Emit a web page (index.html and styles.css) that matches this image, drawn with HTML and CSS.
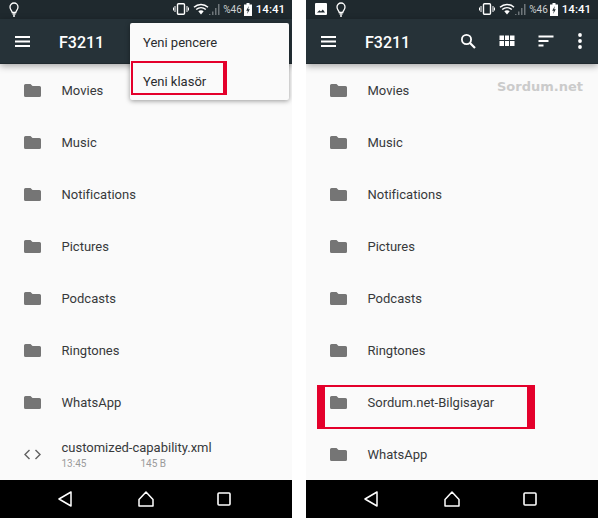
FILE: index.html
```html
<!DOCTYPE html>
<html lang="tr">
<head>
  <meta charset="UTF-8">
  <meta name="viewport" content="width=device-width, initial-scale=1.0">
  <title>Yeni klasör</title>
  <link rel="stylesheet" href="styles.css">
</head>
<body>
  <!-- shared icons -->
  <svg class="icon-defs" width="0" height="0">
    <symbol id="i-folder" viewBox="0 0 17 13">
      <path d="M1.5 0H6.5L8.5 2H15.5A1.5 1.5 0 0 1 17 3.500V11.500A1.500 1.500 0 0 1 15.500 13H1.500A1.500 1.500 0 0 1 0 11.500V1.500A1.500 1.500 0 0 1 1.500 0Z" fill="#757575"/>
    </symbol>
    <symbol id="i-menu" viewBox="0 0 15 11">
      <path d="M0 1H15M0 5.500H15M0 10H15" stroke="#fff" stroke-width="1.800" fill="none"/>
    </symbol>
    <symbol id="i-bulb" viewBox="0 0 10 15">
      <path d="M3.200 10.500C3 8.500 1 7.800 1 5A4 4 0 0 1 9 5C9 7.800 7 8.500 6.800 10.500Z" fill="none" stroke="#fff" stroke-width="1.300"/>
      <path d="M3.500 12H6.500M4 14H6" stroke="#fff" stroke-width="1.300"/>
    </symbol>
    <symbol id="i-vibrate" viewBox="0 0 16 12">
      <rect x="4.500" y="0.700" width="7" height="10.600" rx="1" fill="none" stroke="#fff" stroke-width="1.400"/>
      <path d="M2 3V9M14 3V9M0.500 4.500V7.500M15.500 4.500V7.500" stroke="#fff" stroke-width="1"/>
    </symbol>
    <symbol id="i-wifi" viewBox="0 0 16 12">
      <path d="M1 4.200C5 0.600 11 0.600 15 4.200M3.200 6.500C6 4 10 4 12.800 6.500" fill="none" stroke="#fff" stroke-width="1.500"/>
      <path d="M5.300 8.300C6.800 7 9.200 7 10.700 8.300L8 11.500Z" fill="#fff"/>
    </symbol>
    <symbol id="i-signal" viewBox="0 0 11 11">
      <path d="M0 11H1.500V10H0ZM3 11H4.500V7.500H3ZM6 11H7.500V4H6ZM9 11H10.500V0H9Z" fill="#6f767a"/>
    </symbol>
    <symbol id="i-battery" viewBox="0 0 8 13">
      <path d="M2.500 0H5.500V1.500H8V13H0V1.500H2.500Z" fill="#fff"/>
      <path d="M4.800 3L2.200 7.800H3.800L3.200 11L5.800 6.200H4.200Z" fill="#1f292e"/>
    </symbol>
    <symbol id="i-back" viewBox="0 0 14 16">
      <path d="M13 1V15L1 8Z" fill="none" stroke="#fff" stroke-width="1.500" stroke-linejoin="round"/>
    </symbol>
    <symbol id="i-home" viewBox="0 0 16 16">
      <path d="M8 1L15 8.500V15H1V8.500Z" fill="none" stroke="#fff" stroke-width="1.500" stroke-linejoin="round"/>
    </symbol>
    <symbol id="i-square" viewBox="0 0 14 14">
      <rect x="1" y="1" width="12" height="12" rx="1" fill="none" stroke="#fff" stroke-width="1.600"/>
    </symbol>
  </svg>

  <div class="screens">
    <section class="phone">
      <div class="status-bar">
        <div class="status-left">
          <svg class="ic-bulb"><use href="#i-bulb"/></svg>
        </div>
        <div class="status-right">
          <svg class="ic-vibrate"><use href="#i-vibrate"/></svg>
          <svg class="ic-wifi"><use href="#i-wifi"/></svg>
          <svg class="ic-signal"><use href="#i-signal"/></svg>
          <span class="battery-text">%46</span>
          <svg class="ic-battery"><use href="#i-battery"/></svg>
          <span class="clock">14:41</span>
        </div>
      </div>
      <header class="toolbar">
        <svg class="ic-menu"><use href="#i-menu"/></svg>
        <span class="toolbar-title">F3211</span>
      </header>
      <ul class="file-list">
        <li class="file-row"><svg class="ic-folder"><use href="#i-folder"/></svg><span class="file-name">Movies</span></li>
        <li class="file-row"><svg class="ic-folder"><use href="#i-folder"/></svg><span class="file-name">Music</span></li>
        <li class="file-row"><svg class="ic-folder"><use href="#i-folder"/></svg><span class="file-name">Notifications</span></li>
        <li class="file-row"><svg class="ic-folder"><use href="#i-folder"/></svg><span class="file-name">Pictures</span></li>
        <li class="file-row"><svg class="ic-folder"><use href="#i-folder"/></svg><span class="file-name">Podcasts</span></li>
        <li class="file-row"><svg class="ic-folder"><use href="#i-folder"/></svg><span class="file-name">Ringtones</span></li>
        <li class="file-row"><svg class="ic-folder"><use href="#i-folder"/></svg><span class="file-name">WhatsApp</span></li>
        <li class="file-row">
          <svg class="ic-code" viewBox="0 0 17 11"><path d="M5.500 1L1 5.500L5.500 10M11.500 1L16 5.500L11.500 10" fill="none" stroke="#616161" stroke-width="1.400"/></svg>
          <div class="file-info">
            <span class="file-name">customized-capability.xml</span>
            <div class="file-meta"><span class="file-time">13:45</span><span>145 B</span></div>
          </div>
        </li>
      </ul>
      <nav class="nav-bar">
        <svg class="ic-back"><use href="#i-back"/></svg>
        <svg class="ic-home"><use href="#i-home"/></svg>
        <svg class="ic-square"><use href="#i-square"/></svg>
      </nav>

      <div class="popup-menu">
        <div class="popup-item">Yeni pencere</div>
        <div class="popup-item">Yeni klasör</div>
      </div>
      <div class="mark mark-menu"></div>
    </section>

    <section class="phone">
      <div class="status-bar">
        <div class="status-left">
          <svg class="ic-image" viewBox="0 0 12 12"><path d="M1 0H11A1 1 0 0 1 12 1V11A1 1 0 0 1 11 12H1A1 1 0 0 1 0 11V1A1 1 0 0 1 1 0ZM2 9.500H10L7.800 6.500L6 8.500L4.500 7.300Z" fill="#fff" fill-rule="evenodd"/></svg>
          <svg class="ic-bulb"><use href="#i-bulb"/></svg>
        </div>
        <div class="status-right">
          <svg class="ic-vibrate"><use href="#i-vibrate"/></svg>
          <svg class="ic-wifi"><use href="#i-wifi"/></svg>
          <svg class="ic-signal"><use href="#i-signal"/></svg>
          <span class="battery-text">%46</span>
          <svg class="ic-battery"><use href="#i-battery"/></svg>
          <span class="clock">14:41</span>
        </div>
      </div>
      <header class="toolbar">
        <svg class="ic-menu"><use href="#i-menu"/></svg>
        <span class="toolbar-title">F3211</span>
        <div class="toolbar-actions">
          <svg class="ic-action" viewBox="0 0 24 24"><circle cx="10.500" cy="10.500" r="4.600" fill="none" stroke="#fff" stroke-width="1.800"/><path d="M14 14L19 19" stroke="#fff" stroke-width="2.200"/></svg>
          <svg class="ic-action" viewBox="0 0 24 24"><path d="M4.500 6.500H9V11H4.500ZM10 6.500H14V11H10ZM15 6.500H19.500V11H15ZM4.500 12H9V17H4.500ZM10 12H14V17H10ZM15 12H19.500V17H15Z" fill="#fff"/></svg>
          <svg class="ic-action" viewBox="0 0 24 24"><path d="M4.500 7.500H19.500M4.500 12H14.500M4.500 16.500H9.500" stroke="#fff" stroke-width="1.800" fill="none"/></svg>
          <svg class="ic-action ic-dots" viewBox="0 0 24 24"><circle cx="12" cy="6" r="1.900"/><circle cx="12" cy="12" r="1.900"/><circle cx="12" cy="18" r="1.900"/></svg>
        </div>
      </header>
      <ul class="file-list">
        <li class="file-row"><svg class="ic-folder"><use href="#i-folder"/></svg><span class="file-name">Movies</span></li>
        <li class="file-row"><svg class="ic-folder"><use href="#i-folder"/></svg><span class="file-name">Music</span></li>
        <li class="file-row"><svg class="ic-folder"><use href="#i-folder"/></svg><span class="file-name">Notifications</span></li>
        <li class="file-row"><svg class="ic-folder"><use href="#i-folder"/></svg><span class="file-name">Pictures</span></li>
        <li class="file-row"><svg class="ic-folder"><use href="#i-folder"/></svg><span class="file-name">Podcasts</span></li>
        <li class="file-row"><svg class="ic-folder"><use href="#i-folder"/></svg><span class="file-name">Ringtones</span></li>
        <li class="file-row"><svg class="ic-folder"><use href="#i-folder"/></svg><span class="file-name">Sordum.net-Bilgisayar</span></li>
        <li class="file-row"><svg class="ic-folder"><use href="#i-folder"/></svg><span class="file-name">WhatsApp</span></li>
      </ul>
      <nav class="nav-bar">
        <svg class="ic-back"><use href="#i-back"/></svg>
        <svg class="ic-home"><use href="#i-home"/></svg>
        <svg class="ic-square"><use href="#i-square"/></svg>
      </nav>

      <div class="watermark">Sordum.net</div>
      <div class="mark mark-row"></div>
    </section>
  </div>
</body>
</html>
```

FILE: styles.css
```css
* {
  margin: 0;
  padding: 0;
  box-sizing: border-box;
}

body {
  background-color: white;
  font-family: Roboto, "Liberation Sans", sans-serif;
  color: #37393b;
}

svg {
  display: block;
  flex: none;
}

.icon-defs {
  position: absolute;
}

.screens {
  display: flex;
  justify-content: space-between;
  width: 598px;
  height: 518px;
}

.phone {
  position: relative;
  display: flex;
  flex-direction: column;
  width: 292px;
  height: 518px;
  overflow: hidden;
  background-color: #fafafa;
}

/* status bar */
.status-bar {
  display: flex;
  justify-content: space-between;
  align-items: center;
  height: 19px;
  padding: 0 7px 0 9px;
  background-color: #1f292e;
}

.status-left {
  display: flex;
  align-items: center;
  gap: 9px;
}

.status-right {
  display: flex;
  align-items: center;
  color: white;
}

.ic-bulb { width: 10px; height: 15px; }
.ic-image { width: 12px; height: 12px; }
.ic-vibrate { width: 16px; height: 12px; }
.ic-wifi { width: 16px; height: 12px; margin-left: 4px; }
.ic-signal { width: 11px; height: 11px; margin-left: 0; }
.ic-battery { width: 8px; height: 13px; margin-left: 2px; }

.battery-text {
  margin-left: 3px;
  font-size: 10px;
  color: #cfd2d3;
}

.clock {
  margin-left: 4px;
  font-size: 11.500px;
  font-weight: 500;
}

/* toolbar */
.toolbar {
  position: relative;
  z-index: 1;
  display: flex;
  align-items: center;
  height: 46px;
  padding-left: 15px;
  background-color: #263238;
  border-bottom: 1px solid #1f292e;
  box-shadow: 0 2px 7px rgba(0,0,0,0.35);
}

.ic-menu { width: 15px; height: 11px; }

.toolbar-title {
  margin-left: 29px;
  padding-top: 2px;
  font-size: 16px;
  font-weight: 500;
  color: white;
}

.toolbar-actions {
  display: flex;
  align-items: center;
  gap: 15px;
  margin-left: auto;
  margin-right: 6px;
}

.ic-action { width: 24px; height: 24px; }
.ic-dots { fill: white; margin-left: -5px; }

/* file list */
.file-list {
  flex: 1;
  list-style: none;
}

.file-row {
  display: flex;
  align-items: center;
  height: 52px;
  padding-left: 24px;
}

.ic-folder { width: 17px; height: 13px; margin-right: 20.500px; }
.ic-code { width: 17px; height: 11px; margin-right: 20.500px; }

.file-name {
  padding-top: 2px;
  font-size: 13px;
  line-height: 16px;
}

.file-info {
  display: flex;
  flex-direction: column;
}

.file-meta {
  display: flex;
  padding-top: 2px;
  font-size: 10px;
  line-height: 12px;
  color: #9a9a9a;
}

.file-time {
  width: 79px;
}

/* nav bar */
.nav-bar {
  position: relative;
  z-index: 2;
  display: flex;
  align-items: center;
  height: 38px;
  padding-left: 58px;
  background-color: black;
}

.ic-back { width: 14px; height: 16px; }
.ic-home { width: 16px; height: 16px; margin-left: 66px; }
.ic-square { width: 14px; height: 14px; margin-left: 63px; }

/* overflow menu, lies over the toolbar */
.popup-menu {
  position: absolute;
  top: 23px;
  left: 130px;
  z-index: 3;
  width: 159px;
  height: 77px;
  padding-top: 0;
  background-color: #fafafa;
  border-radius: 2px;
  box-shadow: 0 1px 5px rgba(0,0,0,0.4);
}

.popup-item {
  display: flex;
  align-items: center;
  height: 39px;
  padding-left: 13px;
  font-size: 13px;
  color: #2a2c2e;
}

/* red highlights drawn on the screenshot */
.mark {
  position: absolute;
  z-index: 4;
  border-style: solid;
  border-color: #e4002b;
}

.mark-menu {
  top: 61px;
  left: 131px;
  width: 96px;
  height: 34px;
  border-width: 2px 4px 2px 2px;
}

.mark-row {
  top: 385px;
  left: 11px;
  width: 218px;
  height: 44px;
  border-width: 2px 8px;
}

.watermark {
  position: absolute;
  top: 79px;
  right: 15px;
  z-index: 1;
  font-family: "DejaVu Sans", sans-serif;
  font-size: 13px;
  font-weight: 700;
  color: #cbcbcb;
}
```
